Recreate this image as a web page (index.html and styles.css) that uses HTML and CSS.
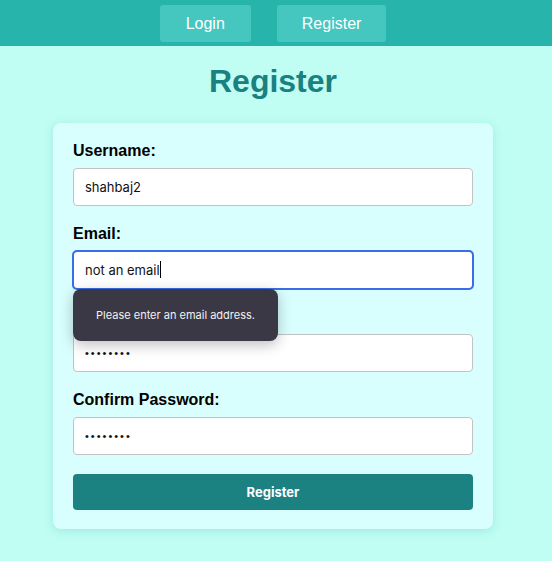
FILE: index.html
```html
<!DOCTYPE html>
<html lang="en">
<head>
<meta charset="utf-8">
<title>Register</title>
<link rel="stylesheet" href="styles.css">
</head>
<body>
<nav class="nav">
  <a class="nav-btn" href="#">Login</a>
  <a class="nav-btn" href="#">Register</a>
</nav>
<main class="main">
  <h1 class="title">Register</h1>
  <form class="card">
    <div class="field">
      <label class="label" for="u">Username:</label>
      <input class="input" id="u" type="text" value="shahbaj2">
    </div>
    <div class="field">
      <label class="label" for="e">Email:</label>
      <div class="input-wrap">
        <input class="input input-focus" id="e" type="text" value="not an email">
        <span class="caret"></span>
        <div class="tooltip">Please enter an email address.</div>
      </div>
    </div>
    <div class="field">
      <label class="label label-hidden" for="p">Password:</label>
      <input class="input input-pw" id="p" type="password" value="12345678">
    </div>
    <div class="field">
      <label class="label" for="c">Confirm Password:</label>
      <input class="input input-pw" id="c" type="password" value="12345678">
    </div>
    <button class="submit" type="button">Register</button>
  </form>
</main>
</body>
</html>
```
FILE: styles.css
```css
* { box-sizing: border-box; }
html, body { margin: 0; padding: 0; }
body {
  background: #c0fdf3;
  font-family: "Liberation Sans", Arial, sans-serif;
  color: #000;
  height: 561px;
  overflow: hidden;
}
.nav {
  background: #27b4ab;
  height: 46px;
  display: flex;
  justify-content: center;
  align-items: flex-start;
  gap: 26px;
  padding: 5px 6px 0 0;
}
.nav-btn {
  display: flex;
  align-items: center;
  justify-content: center;
  height: 37px;
  padding: 0 26px;
  background: #45c7bf;
  color: #fff;
  border-radius: 3px;
  font-size: 16px;
  text-decoration: none;
}
.nav-btn + .nav-btn { padding: 0 25px; }
.main {
  padding-right: 6px;
  display: flex;
  flex-direction: column;
  align-items: center;
}
.title {
  margin: 17px 0 0;
  font-size: 32px;
  line-height: 37px;
  font-weight: bold;
  color: #1a8181;
}
.card {
  margin-top: 23px;
  width: 440px;
  background: #d9fefe;
  border-radius: 8px;
  box-shadow: 0 2px 10px rgba(40, 170, 160, 0.22);
  padding: 19px 20px 19px;
  display: flex;
  flex-direction: column;
}
.field {
  display: flex;
  flex-direction: column;
  margin-bottom: 8px;
}
.label {
  font-size: 16px;
  font-weight: bold;
  line-height: 18px;
  margin-bottom: 8px;
}
.label-hidden { visibility: hidden; }
.input-wrap { position: relative; }
.input {
  width: 100%;
  height: 38px;
  border: 1px solid #c3c3c3;
  border-radius: 4px;
  background: #fff;
  padding: 0 11px;
  font-family: "Inter", "Liberation Sans", sans-serif;
  font-size: 13px;
  color: #111;
  margin: 0 0 11px;
}
.input-focus {
  outline: 2px solid #3a6ee8;
  outline-offset: -1px;
}
.input-pw {
  font-family: "Liberation Sans", sans-serif;
  font-size: 11px;
  letter-spacing: 2px;
}
.caret {
  position: absolute;
  left: 87px;
  top: 10px;
  width: 1px;
  height: 17px;
  background: #000;
}
.tooltip {
  position: absolute;
  left: 0;
  top: 38px;
  width: 205px;
  height: 52px;
  background: #3b3845;
  color: #f2f2f2;
  border-radius: 8px;
  box-shadow: 0 4px 14px rgba(0, 0, 0, 0.25);
  font-family: "Inter", "Liberation Sans", sans-serif;
  font-size: 11px;
  display: flex;
  align-items: center;
  justify-content: center;
  z-index: 2;
}
.submit {
  height: 36px;
  border: 0;
  border-radius: 4px;
  background: #1b8181;
  color: #fff;
  font-family: "Inter", "Liberation Sans", sans-serif;
  font-weight: bold;
  font-size: 13px;
}
```
